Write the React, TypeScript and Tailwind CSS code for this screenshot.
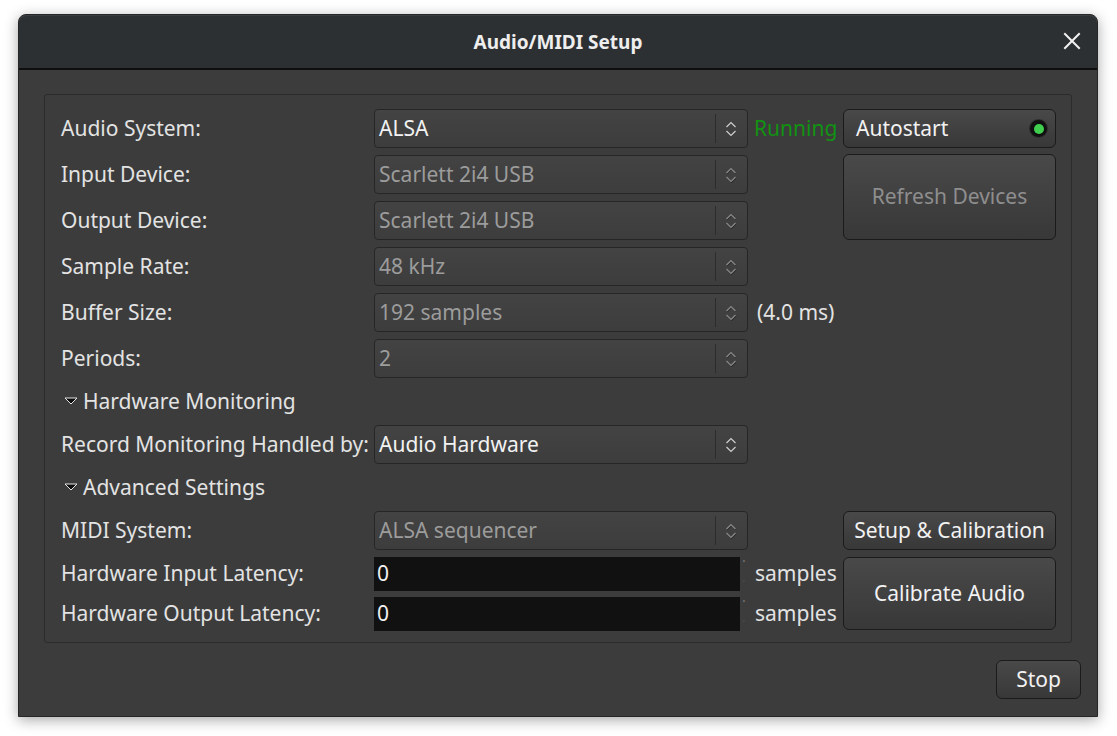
import React from "react";

const font = { fontFamily: '"Noto Sans", "Open Sans", sans-serif' };

function Chevrons({ disabled }: { disabled?: boolean }) {
  const c = disabled ? "#8a8a8a" : "#cfcfcf";
  return (
    <svg width="12" height="16" viewBox="0 0 12 16" fill="none">
      {disabled && (
        <g stroke="#2a2a2a" strokeWidth="1.2" transform="translate(0.6,0.8)">
          <polyline points="1.5,6 6,1.5 10.5,6" />
          <polyline points="1.5,10 6,14.5 10.5,10" />
        </g>
      )}
      <g stroke={c} strokeWidth="1.2">
        <polyline points="1.5,6 6,1.5 10.5,6" />
        <polyline points="1.5,10 6,14.5 10.5,10" />
      </g>
    </svg>
  );
}

function Combo({ text, disabled, className = "" }: { text: string; disabled?: boolean; className?: string }) {
  return (
    <div
      className={`h-[39px] self-start flex items-stretch rounded-[4px] border border-[#262626] bg-gradient-to-b from-[#434343] to-[#3d3d3d] ${className}`}
    >
      <div className={`flex-1 flex items-center pl-[4px] ${disabled ? "text-[#9c9c9c]" : "text-[#f2f2f2]"}`}>{text}</div>
      <div className="w-px my-[4px] bg-[#2c2c2c]" />
      <div className="w-[31px] flex items-center justify-center pr-[2px]">
        <Chevrons disabled={disabled} />
      </div>
    </div>
  );
}

function Label({ text, className = "" }: { text: string; className?: string }) {
  return <div className={`flex items-center text-[#e3e3e3] ${className}`}>{text}</div>;
}

function Heading({ text, className = "" }: { text: string; className?: string }) {
  return (
    <div className={`flex items-center text-[#e3e3e3] pl-[3px] ${className}`}>
      <svg width="14" height="8" viewBox="0 0 14 8" className="mr-[5px] mt-[-3px]">
        <polygon points="1,1 13,1 7,7" fill="#0d0d0d" stroke="#e6e6e6" strokeWidth="1" strokeLinejoin="round" />
      </svg>
      {text}
    </div>
  );
}

function Btn({ children, className = "" }: { children: React.ReactNode; className?: string }) {
  return (
    <div
      className={`rounded-[6px] border border-[#1b1b1b] bg-gradient-to-b from-[#4a494a] to-[#393839] flex items-center ${className}`}
    >
      {children}
    </div>
  );
}

function LatencyInput({ className = "" }: { className?: string }) {
  return (
    <div className={`flex items-stretch ${className}`}>
      <div className="w-[366px] h-[34px] bg-[#111111] flex items-center pl-[3px] text-[#f0f0f0]">0</div>
      <div className="w-[8px] flex flex-col justify-between items-center py-[3px] text-[8px] leading-none">
        <span className="text-[#bdbdbd]">˄</span>
        <span className="text-[#5a5a5a]">˅</span>
      </div>
    </div>
  );
}

export default function App() {
  return (
    <div className="w-[1117px] h-[736px] bg-white overflow-hidden" style={font}>
      <div className="ml-[18px] mt-[14px] w-[1080px] h-[703px] rounded-t-[8px] border border-[#262626] bg-[#3c3c3c] shadow-[0_3px_14px_rgba(0,0,0,0.35)] flex flex-col overflow-hidden">
        {/* Title bar */}
        <div className="h-[53px] shrink-0 bg-[#2d3033] border-t border-[#3a3e41] rounded-t-[8px] flex items-center relative">
          <div className="flex-1 text-center text-[#eeeeee] font-bold text-[19px] pt-[1px]">Audio/MIDI Setup</div>
          <div className="absolute right-[16px] top-[16px]">
            <svg width="18" height="18" viewBox="0 0 18 18">
              <path d="M2 2 L16 16 M16 2 L2 16" stroke="#f2f2f2" strokeWidth="2" strokeLinecap="square" />
            </svg>
          </div>
        </div>
        <div className="h-[2px] shrink-0 bg-[#0f0f0f]" />
        {/* Body */}
        <div className="flex-1 flex flex-col pt-[24px] px-[25px] text-[21px]">
          <div className="h-[549px] border border-[#2b2b2b] rounded-[3px] pt-[14px] pl-[16px] pr-[15px]">
            <div className="grid grid-cols-[313px_374px_95px_213px] grid-rows-[40px_40px_40px_40px_40px_40px_34px_40px_34px_40px_34px_34px] gap-y-[6px]">
              <Label text="Audio System:" className="col-start-1 row-start-1" />
              <Combo text="ALSA" className="col-start-2 row-start-1" />
              <div className="col-start-3 row-start-1 flex items-center pl-[6px] text-[#129212]">Running</div>
              <Btn className="col-start-4 row-start-1 h-[39px] self-start justify-between pl-[12px] pr-[8px] text-[#f2f2f2]">
                <span>Autostart</span>
                <span className="w-[17px] h-[17px] rounded-full bg-[#101010] flex items-center justify-center shadow-[0_0_0_1px_#2e2e2e]">
                  <span className="w-[10px] h-[10px] rounded-full bg-[#3fce4e]" />
                </span>
              </Btn>

              <Label text="Input Device:" className="col-start-1 row-start-2" />
              <Combo text="Scarlett 2i4 USB" disabled className="col-start-2 row-start-2" />
              <Btn className="col-start-4 row-start-2 row-span-2 h-[86px] self-start mt-[-1px] justify-center text-[#8e8e8e]">
                Refresh Devices
              </Btn>

              <Label text="Output Device:" className="col-start-1 row-start-3" />
              <Combo text="Scarlett 2i4 USB" disabled className="col-start-2 row-start-3" />

              <Label text="Sample Rate:" className="col-start-1 row-start-4" />
              <Combo text="48 kHz" disabled className="col-start-2 row-start-4" />

              <Label text="Buffer Size:" className="col-start-1 row-start-5" />
              <Combo text="192 samples" disabled className="col-start-2 row-start-5" />
              <Label text="(4.0 ms)" className="col-start-3 row-start-5 pl-[9px]" />

              <Label text="Periods:" className="col-start-1 row-start-6" />
              <Combo text="2" disabled className="col-start-2 row-start-6" />

              <Heading text="Hardware Monitoring" className="col-start-1 col-span-2 row-start-7" />

              <Label text="Record Monitoring Handled by:" className="col-start-1 row-start-8" />
              <Combo text="Audio Hardware" className="col-start-2 row-start-8" />

              <Heading text="Advanced Settings" className="col-start-1 col-span-2 row-start-9" />

              <Label text="MIDI System:" className="col-start-1 row-start-10" />
              <Combo text="ALSA sequencer" disabled className="col-start-2 row-start-10" />
              <Btn className="col-start-4 row-start-10 h-[39px] self-start justify-center text-[#f2f2f2]">
                Setup &amp; Calibration
              </Btn>

              <Label text="Hardware Input Latency:" className="col-start-1 row-start-11" />
              <LatencyInput className="col-start-2 row-start-11" />
              <Label text="samples" className="col-start-3 row-start-11 pl-[7px]" />
              <Btn className="col-start-4 row-start-11 row-span-2 h-[73px] self-start justify-center text-[#f2f2f2]">
                Calibrate Audio
              </Btn>

              <Label text="Hardware Output Latency:" className="col-start-1 row-start-12" />
              <LatencyInput className="col-start-2 row-start-12" />
              <Label text="samples" className="col-start-3 row-start-12 pl-[7px]" />
            </div>
          </div>
          <div className="flex justify-end mt-[17px] mr-[-9px]">
            <Btn className="w-[85px] h-[39px] justify-center text-[#f2f2f2]">Stop</Btn>
          </div>
        </div>
      </div>
    </div>
  );
}
